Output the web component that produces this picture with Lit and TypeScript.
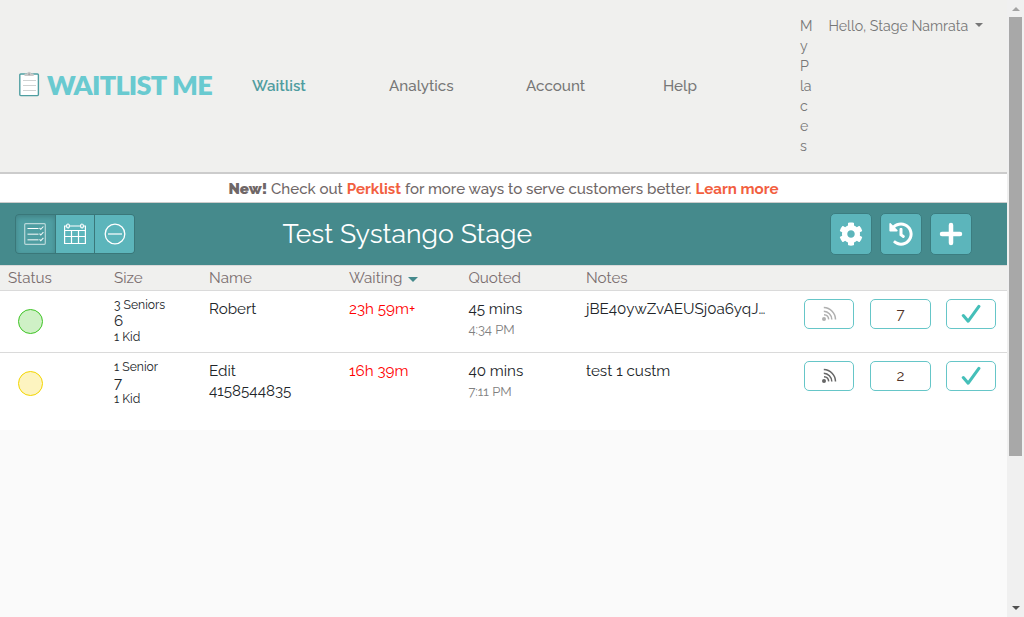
import { LitElement, html, css } from "lit";
import { customElement } from "lit/decorators.js";
import { classMap } from "lit/directives/class-map.js";

interface Party {
  status: string;
  top: string;
  size: string;
  kids: string;
  name: string;
  phone: string;
  waiting: string;
  quoted: string;
  at: string;
  notes: string;
  muted: boolean;
  count: string;
}

const PARTIES: Party[] = [
  { status: "green", top: "3 Seniors", size: "6", kids: "1 Kid", name: "Robert", phone: "", waiting: "23h 59m+", quoted: "45 mins", at: "4:34 PM", notes: "jBE40ywZvAEUSj0a6yqJ…", muted: true, count: "7" },
  { status: "yellow", top: "1 Senior", size: "7", kids: "1 Kid", name: "Edit", phone: "4158544835", waiting: "16h 39m", quoted: "40 mins", at: "7:11 PM", notes: "test 1 custm", muted: false, count: "2" },
];

const clipboard = html`<svg class="clip" width="22" height="26" viewBox="0 0 22 26">
  <rect x="1.8" y="3" width="18.6" height="21.6" rx="1" fill="#fff" stroke="#4f9ea1" stroke-width="1.4"/>
  <path d="M5 9.5h13M5 14.5h13M5 19.5h13" stroke="#cfd2d2" stroke-width="1"/>
  <path d="M6.500 5v-1.800q0-.7.800-.7h1.700q.5-1.700 2.100-1.700t2.100 1.700h1.700q.8 0 .8.700v1.800z" fill="#c9c9c9"/>
  <circle cx="11.100" cy="3.200" r="1" fill="#a5a5a5"/>
</svg>`;

const listIcon = html`<svg width="22" height="22" viewBox="0 0 22 22" fill="none" stroke="#fff">
  <rect x=".7" y=".7" width="20.600" height="20.600" rx="1" stroke-width="1.200" opacity=".6"/>
  <path d="M3.500 5.500h11" stroke-width="1.200"/>
  <path d="M3.500 11.300h11M3.500 16.800h11" stroke-width="1.400" opacity=".65"/>
  <path d="M15.500 5l1.300 1.300 2.600-2.800M15.500 10.700l1.300 1.300 2.600-2.800M15.500 16.300l1.300 1.300 2.600-2.800" stroke-width="1.100" opacity=".9"/>
</svg>`;

const calendarIcon = html`<svg width="24" height="22" viewBox="0 0 24 22" fill="none" stroke="#fff" stroke-width="1.200">
  <path d="M3.500 3H1.600v17.500h20.800V3h-1.900M6.500 3h11M1.600 7.500h20.800M1.600 13.500h20.800M8.500 7.500v13M15.500 7.500v13"/>
  <ellipse cx="5" cy="3" rx="1.400" ry="2"/><ellipse cx="19" cy="3" rx="1.400" ry="2"/>
</svg>`;

const minusIcon = html`<svg width="22" height="22" viewBox="0 0 22 22" fill="none" stroke="#fff">
  <circle cx="11" cy="11" r="9.800" stroke-width="1.300"/>
  <path d="M4 11h14" stroke-width="2" opacity=".6"/>
</svg>`;

const gearIcon = html`<svg width="24" height="24" viewBox="0 0 512 512"><path fill="#fff" d="M487.400 315.700l-42.600-24.600c4.300-23.200 4.300-47 0-70.200l42.600-24.600c4.900-2.800 7.100-8.600 5.500-14-11.100-35.600-30-67.800-54.700-94.600-3.800-4.100-10-5.100-14.800-2.300L380.800 110c-17.900-15.400-38.500-27.300-60.800-35.100V25.800c0-5.600-3.900-10.500-9.400-11.700-36.700-8.200-74.300-7.800-109.200 0-5.500 1.200-9.400 6.100-9.400 11.700V75c-22.200 7.900-42.800 19.800-60.800 35.100L88.700 85.500c-4.900-2.800-11-1.900-14.800 2.300-24.700 26.700-43.600 58.900-54.700 94.600-1.700 5.400.6 11.200 5.500 14L67.300 221c-4.300 23.200-4.300 47 0 70.200l-42.600 24.600c-4.900 2.800-7.100 8.600-5.500 14 11.100 35.600 30 67.800 54.700 94.600 3.800 4.100 10 5.100 14.800 2.300l42.600-24.600c17.900 15.400 38.500 27.300 60.800 35.100v49.200c0 5.600 3.900 10.500 9.400 11.700 36.700 8.200 74.300 7.800 109.200 0 5.500-1.200 9.400-6.100 9.400-11.700v-49.200c22.200-7.900 42.800-19.800 60.800-35.100l42.600 24.600c4.900 2.800 11 1.900 14.800-2.300 24.700-26.700 43.600-58.900 54.700-94.600 1.500-5.500-.7-11.300-5.600-14.100zM256 336c-44.100 0-80-35.900-80-80s35.900-80 80-80 80 35.900 80 80-35.900 80-80 80z"/></svg>`;

const historyIcon = html`<svg width="24" height="24" viewBox="0 0 512 512"><path fill="#fff" d="M504 255.500c.3 136.600-111.200 248.400-247.800 248.500-59 0-113.200-20.500-155.800-54.900-11.100-8.900-11.900-25.500-1.800-35.600l11.300-11.300c8.600-8.600 22.400-9.600 31.900-2C173.100 425.100 212.800 440 256 440c101.700 0 184-82.300 184-184 0-101.700-82.300-184-184-184-48.800 0-93.100 19-126.100 50l50.800 50.800c10.100 10.100 2.900 27.300-11.300 27.300H24c-8.800 0-16-7.200-16-16V38.600c0-14.300 17.200-21.400 27.300-11.300l49.400 49.400C129.200 34.100 189.600 8 256 8c136.800 0 247.700 110.800 248 247.500zm-180.900 78.800l9.800-12.600c8.100-10.500 6.300-25.500-4.200-33.700L288 256.300V152c0-13.300-10.700-24-24-24h-16c-13.300 0-24 10.700-24 24v135.700l65.400 50.900c10.500 8.100 25.500 6.300 33.700-4.300z"/></svg>`;

const plusIcon = html`<svg width="24" height="24" viewBox="0 0 24 24"><path d="M12 3v18M3 12h18" stroke="#fff" stroke-width="4.500" stroke-linecap="round"/></svg>`;

const signalIcon = (color: string) => html`<svg width="16" height="16" viewBox="0 0 16 16" fill="none" stroke=${color} stroke-width="1.500">
  <circle cx="3" cy="13" r="2" fill=${color} stroke="none"/>
  <path d="M2.800 1.600a12 12 0 0 1 11.700 12M2.800 5.200a8.400 8.400 0 0 1 8 8.200M3 8.700a5 5 0 0 1 4.700 4.700"/>
</svg>`;

const checkIcon = html`<svg width="20" height="20" viewBox="0 0 20 20"><path d="M2.300 11.600l4.900 5.600L17.900 2.400" fill="none" stroke="#45bfb9" stroke-width="3.100" stroke-linecap="round" stroke-linejoin="round"/></svg>`;

@customElement("app-root")
export class AppRoot extends LitElement {
  static styles = css`
    :host { display: flex; width: 1024px; height: 617px; overflow: hidden; background: #fafafa;
      font-family: Raleway, Lato, "Open Sans", sans-serif; font-size: 15.2px; line-height: 20px; color: #212529; }
    * { box-sizing: border-box; }
    svg { display: block; }
    .page { width: 1007px; flex: none; }
    .header { height: 174px; background: #f0f0ee; border-bottom: 2px solid #ccc; display: flex; color: #777; }
    .brand { display: flex; align-items: center; width: 252px; padding: 0 0 4px 18px; flex: none; }
    .word { margin-left: 7px; padding-top: 1px; font-family: Lato, sans-serif; font-size: 27px; line-height: 30px; font-weight: 800; color: #69cad0; letter-spacing: -.75px; word-spacing: 1px; white-space: nowrap; }
    .nav { display: flex; align-items: center; flex: 1; font-weight: 500; }
    .nav span { width: 137px; }
    .nav .on { color: #4f9da0; font-weight: 600; font-size: 15.1px; }
    .user { display: flex; width: 207px; padding-top: 16px; font-size: 14.2px; }
    .places { width: 28.4px; display: flex; flex-direction: column; }
    .caret { display: inline-block; border: 4px solid transparent; border-top-color: #777; border-bottom: 0; margin-left: 7px; vertical-align: 4px; }
    .promo { height: 29px; background: #fff; border-bottom: 1px solid #ccc; display: flex; justify-content: center; align-items: center;
      padding-top: 1px; color: #6f6767; font-size: 15.1px; font-weight: 500; white-space: pre; }
    .promo b { font-weight: 900; }
    .promo .link { color: #f2603f; font-weight: 700; }
    .bar { height: 62px; background: #458a8c; display: flex; align-items: center; padding: 0 35px 0 15px; }
    .views { display: flex; border: 1px solid #3a7779; border-radius: 4px; overflow: hidden; width: 120px; height: 40px; gap: 1px; background: #3a7779; }
    .view { flex: 1; display: flex; align-items: center; justify-content: center; background: #5cb5bb; }
    .view.active { background: #4f9ea2; box-shadow: inset 0 2px 5px rgba(0,0,0,.18); }
    .title { margin: 0 0 0 147.4px; font-size: 26.65px; line-height: 34px; font-weight: 400; color: #fff; flex: 1; white-space: nowrap; }
    .tools { display: flex; gap: 8px; }
    .tool { width: 42px; height: 42px; background: #5cb5bb; border: 1px solid #3b7d80; border-radius: 5px; display: flex; align-items: center; justify-content: center; }
    .row { display: grid; grid-template-columns: 106px 95px 140px 119.4px 117.6px 218px 66px 76px 50px; padding-left: 8px; background: #fff; }
    .head { height: 26px; background: #f0f0ee; border-top: 1px solid #dadada; border-bottom: 1px solid #dadada; color: #7a6e6e; line-height: 24px; }
    .party { height: 62px; padding-top: 8px; border-bottom: 1px solid #dadada; white-space: nowrap; }
    .party.last { height: 77px; border-bottom: 0; }
    .dot { width: 25px; height: 25px; border-radius: 50%; margin: 10px 0 0 10px; border: 1px solid; }
    .green { background: #cff1c6; border-color: #3fc426; }
    .yellow { background: #fdf4c0; border-color: #f3d500; }
    .small { font-size: 12.16px; line-height: 12px; }
    .size { line-height: 20px; }
    .late { color: #f00; }
    .at { color: #808080; font-size: 13px; line-height: 22px; }
    .btn { height: 30px; border: 1px solid #66c6c8; border-radius: 5px; display: flex; align-items: center; justify-content: center; }
    .signal { width: 50px; }
    .count { width: 61px; color: #513327; }
    .sort { display: inline-block; border: 5px solid transparent; border-top-color: #458a8c; border-bottom: 0; margin-left: 6px; vertical-align: 1.5px; }
    .scroll { width: 17px; background: #f0f0f0; display: flex; flex-direction: column; align-items: center; padding: 7px 0 7px 0; }
    .up { border: 4px solid transparent; border-bottom: 4px solid #a3a3a3; border-top: 0; }
    .thumb { width: 13px; height: 439px; margin-top: 6px; background: #a8a8a8; }
    .down { margin-top: auto; border: 4px solid transparent; border-top: 4px solid #505050; border-bottom: 0; }
  `;

  private party(p: Party, last: boolean) {
    return html`<div class=${classMap({ row: true, party: true, last })}>
      <div><div class="dot ${p.status}"></div></div>
      <div><div class="small">${p.top}</div><div class="size">${p.size}</div><div class="small">${p.kids}</div></div>
      <div><div>${p.name}</div><div>${p.phone}</div></div>
      <div class="late">${p.waiting}</div>
      <div><div>${p.quoted}</div><div class="at">${p.at}</div></div>
      <div class="notes">${p.notes}</div>
      <div class="btn signal">${signalIcon(p.muted ? "#b0b0b0" : "#666")}</div>
      <div class="btn count">${p.count}</div>
      <div class="btn">${checkIcon}</div>
    </div>`;
  }

  render() {
    return html`
      <div class="page">
        <div class="header">
          <div class="brand">${clipboard}<span class="word">WAITLIST ME</span></div>
          <div class="nav"><span class="on">Waitlist</span><span>Analytics</span><span>Account</span><span>Help</span></div>
          <div class="user">
            <div class="places">${["M", "y", "P", "la", "c", "e", "s"].map((t) => html`<span>${t}</span>`)}</div>
            <div><span class="hello">Hello, Stage Namrata</span><i class="caret"></i></div>
          </div>
        </div>
        <div class="promo"><b>New!</b> Check out <span class="link">Perklist</span> for more ways to serve customers better. <span class="link">Learn more</span></div>
        <div class="bar">
          <div class="views">
            <div class="view active">${listIcon}</div><div class="view">${calendarIcon}</div><div class="view">${minusIcon}</div>
          </div>
          <h1 class="title">Test Systango Stage</h1>
          <div class="tools"><div class="tool">${gearIcon}</div><div class="tool">${historyIcon}</div><div class="tool">${plusIcon}</div></div>
        </div>
        <div class="row head"><span>Status</span><span>Size</span><span>Name</span><span>Waiting<i class="sort"></i></span><span>Quoted</span><span>Notes</span></div>
        ${PARTIES.map((p, i) => this.party(p, i === PARTIES.length - 1))}
      </div>
      <div class="scroll"><i class="up"></i><div class="thumb"></div><i class="down"></i></div>
    `;
  }
}
